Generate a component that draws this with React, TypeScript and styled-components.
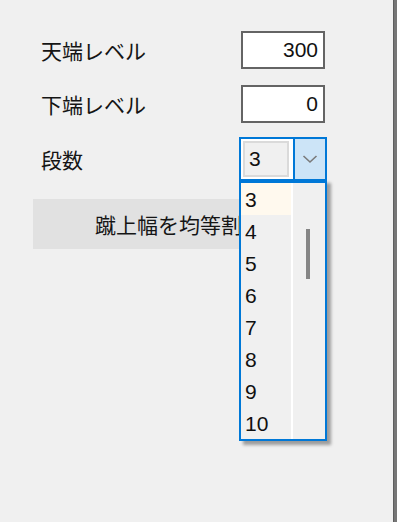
import React from "react";
import styled, { createGlobalStyle } from "styled-components";

const Global = createGlobalStyle`
  html, body { margin: 0; padding: 0; background: #f0f0f0; }
  body { font-family: "Liberation Sans", "Noto Sans CJK JP", sans-serif; color: #111; }
`;

const Page = styled.div`
  display: flex;
  width: 397px;
  height: 522px;
  background: #f0f0f0;
  overflow: hidden;
`;

const Main = styled.div`
  flex: 1;
  display: flex;
  flex-direction: column;
  padding: 31px 0 0 33px;
`;

const Edge = styled.div`
  width: 3px;
  background: #767676;
  border-left: 1px solid #5e5e5e;
`;

const Row = styled.div<{ $mt?: number; $h: number }>`
  display: flex;
  align-items: center;
  justify-content: space-between;
  width: 292px;
  height: ${(p) => p.$h}px;
  margin-top: ${(p) => p.$mt ?? 0}px;
`;

const Label = styled.span`
  padding-left: 8px;
  font-family: "Noto Sans CJK JP", sans-serif;
  font-size: 21px;
  line-height: 1;
  color: #151515;
`;

const NumInput = styled.input`
  box-sizing: border-box;
  width: 84px;
  height: 38px;
  border: 2px solid #646464;
  background: #fff;
  padding: 0 5px 0 4px;
  margin: 0;
  text-align: right;
  font-family: "Liberation Sans", sans-serif;
  font-size: 21px;
  color: #111;
  outline: none;
`;

const ComboWrap = styled.div`
  position: relative;
  margin-right: -2px;
`;

const Combo = styled.div`
  box-sizing: border-box;
  display: flex;
  width: 88px;
  height: 44px;
  border: 2px solid #0078d7;
  background: #fff;
`;

const ComboField = styled.div`
  flex: 1;
  display: flex;
  padding: 2px 4px 2px 2px;
  background: #fff;
`;

const FieldFocus = styled.div`
  flex: 1;
  display: flex;
  align-items: center;
  box-sizing: border-box;
  border: 2px solid #dadada;
  background: #f0f0f0;
  padding-left: 4px;
  font-size: 21px;
`;

const DropButton = styled.div`
  width: 30px;
  display: flex;
  align-items: center;
  justify-content: center;
  border-left: 2px solid #0078d7;
  background: #cce4f7;
`;

const List = styled.div`
  position: absolute;
  left: 0;
  top: 42px;
  box-sizing: border-box;
  width: 88px;
  height: 262px;
  display: flex;
  border: 2px solid #0078d7;
  border-top-width: 4px;
  background: #f0f0f0;
  box-shadow: 4px 4px 3px rgba(0, 0, 0, 0.35);
  z-index: 2;
`;

const Items = styled.div`
  width: 50px;
  display: flex;
  flex-direction: column;
  border-right: 2px solid #ffffff;
`;

const Item = styled.div<{ $selected?: boolean }>`
  height: 32px;
  display: flex;
  align-items: center;
  padding: 2px 0 0 4px;
  box-sizing: border-box;
  font-size: 21px;
  background: ${(p) => (p.$selected ? "#fff9ee" : "#f0f0f0")};
`;

const ScrollTrack = styled.div`
  flex: 1;
  display: flex;
  justify-content: center;
  padding-top: 46px;
  padding-right: 2px;
`;

const Thumb = styled.div`
  width: 4px;
  height: 50px;
  background: #858585;
`;

const ActionButton = styled.div`
  box-sizing: border-box;
  width: 292px;
  height: 50px;
  margin-top: 18px;
  display: flex;
  align-items: center;
  justify-content: center;
  background: #e1e1e1;
  font-family: "Noto Sans CJK JP", sans-serif;
  font-size: 21px;
  color: #151515;
`;

const Chevron = () => (
  <svg width="16" height="10" viewBox="0 0 16 10">
    <path d="M1.5 2 L8 8 L14.5 2" fill="none" stroke="#7a7a7a" strokeWidth="1.6" />
  </svg>
);

const options = [3, 4, 5, 6, 7, 8, 9, 10];

export default function App() {
  return (
    <>
      <Global />
      <Page>
        <Main>
          <Row $h={38}>
            <Label>天端レベル</Label>
            <NumInput readOnly value="300" />
          </Row>
          <Row $h={38} $mt={16}>
            <Label>下端レベル</Label>
            <NumInput readOnly value="0" />
          </Row>
          <Row $h={44} $mt={14}>
            <Label>段数</Label>
            <ComboWrap>
              <Combo>
                <ComboField>
                  <FieldFocus>3</FieldFocus>
                </ComboField>
                <DropButton>
                  <Chevron />
                </DropButton>
              </Combo>
              <List>
                <Items>
                  {options.map((o) => (
                    <Item key={o} $selected={o === 3}>
                      {o}
                    </Item>
                  ))}
                </Items>
                <ScrollTrack>
                  <Thumb />
                </ScrollTrack>
              </List>
            </ComboWrap>
          </Row>
          <ActionButton>蹴上幅を均等割付</ActionButton>
        </Main>
        <Edge />
      </Page>
    </>
  );
}
